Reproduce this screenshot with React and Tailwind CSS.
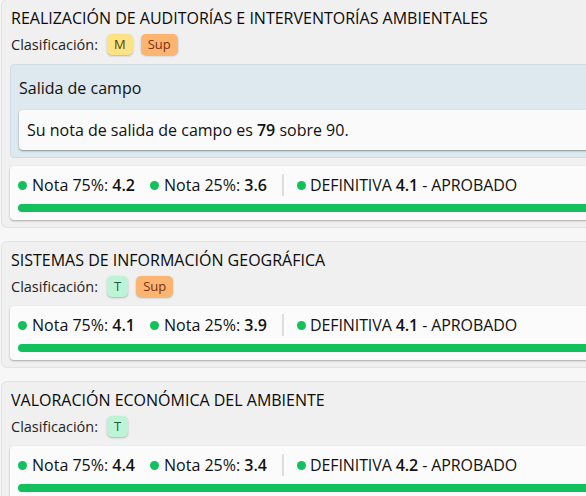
import React from "react";

const font = { fontFamily: '"Open Sans", "Noto Sans", sans-serif' };

function Badge({ kind, children }) {
  const cls =
    kind === "M"
      ? "bg-[#fde384] text-[#5a4300]"
      : kind === "T"
      ? "bg-[#bdf3d6] text-[#1d5a3a]"
      : "bg-[#fcb570] text-[#7a2e10]";
  return (
    <span
      className={`inline-flex h-[21px] items-center rounded-[5px] px-[7px] text-[13px] leading-none shadow-[0_1px_2px_rgba(0,0,0,0.25)] ${cls}`}
    >
      {children}
    </span>
  );
}

function Dot() {
  return <span className="inline-block h-[9px] w-[9px] shrink-0 rounded-full bg-[#12c05c]" />;
}

function Grades({ a, b, d }) {
  return (
    <div className="flex flex-col gap-[8px] rounded-[4px] bg-[#fbfbfb] px-[8px] pb-[8px] pt-[8px] shadow-[0_1px_2px_rgba(0,0,0,0.3)]">
      <div className="flex h-[22px] items-center text-[16px] text-[#111]">
        <div className="flex items-center gap-[5px]">
          <Dot />
          <span>
            Nota 75%: <span className="font-semibold">{a}</span>
          </span>
        </div>
        <div className="ml-[15px] flex items-center gap-[5px]">
          <Dot />
          <span>
            Nota 25%: <span className="font-semibold">{b}</span>
          </span>
        </div>
        <div className="ml-[15px] mr-[13px] h-[22px] w-[2px] bg-[#dedede]" />
        <div className="flex items-center gap-[4px]">
          <Dot />
          <span className="tracking-[-0.1px]">
            DEFINITIVA <span className="font-semibold">{d}</span> - APROBADO
          </span>
        </div>
      </div>
      <div className="h-[8px] w-full rounded-full bg-[#12c05c]" />
    </div>
  );
}

function Card({ title, badges, children }) {
  return (
    <div className="rounded-[6px] border border-[#e2e2e2] bg-[#f0f0f0] px-[8px] pb-[7px] pt-[8px]">
      <div className="pl-[1px] text-[16px] font-medium leading-[20px] text-[#0a0a0a]">{title}</div>
      <div className="mt-[6px] flex h-[21px] items-center gap-[8px] pl-[1px]">
        <span className="mr-[1px] text-[14.5px] text-[#222]">Clasificación:</span>
        {badges.map((b) => (
          <Badge key={b} kind={b}>
            {b}
          </Badge>
        ))}
      </div>
      <div className="mt-[9px] flex flex-col gap-[8px]">{children}</div>
    </div>
  );
}

export default function App() {
  return (
    <div className="h-[496px] w-[586px] overflow-hidden bg-[#f7f7f7]" style={font}>
      <div className="-mt-[1px] ml-[1px] flex w-[680px] flex-col gap-[13px]">
        <Card
          title="REALIZACIÓN DE AUDITORÍAS E INTERVENTORÍAS AMBIENTALES"
          badges={["M", "Sup"]}
        >
          <div className="rounded-[4px] border border-[#cfdde3] bg-[#dde9ee] px-[8px] pb-[7px] pt-[13px]">
            <div className="text-[16px] font-medium leading-[20px] text-[#111]">Salida de campo</div>
            <div className="mt-[12px] flex h-[40px] items-center rounded-[4px] bg-[#fafafa] px-[8px] text-[16px] text-[#111] shadow-[0_1px_2px_rgba(0,0,0,0.4)]">
              <span>
                Su nota de salida de campo es <span className="font-semibold">79</span> sobre 90.
              </span>
            </div>
          </div>
          <Grades a="4.2" b="3.6" d="4.1" />
        </Card>
        <Card title="SISTEMAS DE INFORMACIÓN GEOGRÁFICA" badges={["T", "Sup"]}>
          <Grades a="4.1" b="3.9" d="4.1" />
        </Card>
        <Card title="VALORACIÓN ECONÓMICA DEL AMBIENTE" badges={["T"]}>
          <Grades a="4.4" b="3.4" d="4.2" />
        </Card>
      </div>
    </div>
  );
}
